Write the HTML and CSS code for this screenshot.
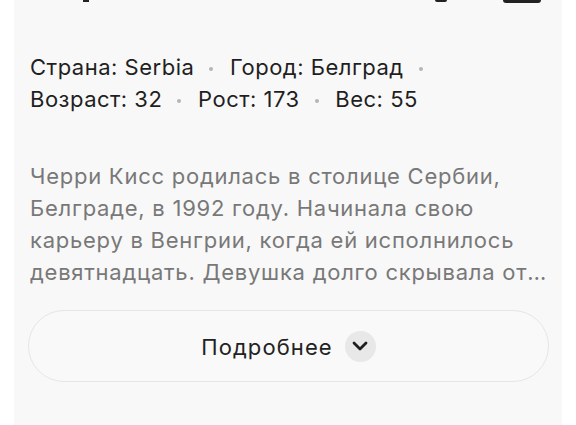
FILE: index.html
```html
<!DOCTYPE html>
<html lang="ru">
<head>
<meta charset="utf-8">
<link rel="stylesheet" href="styles.css">
</head>
<body>
<div class="panel">
  <div class="topcut">
    <span class="frag frag-a"></span>
    <span class="frag frag-b"></span>
    <span class="frag frag-c"></span>
  </div>
  <div class="info">
    <span class="item">Страна: Serbia<span class="dot"></span></span> <span class="item">Город: Белград<span class="dot"></span></span> <span class="item">Возраст: 32<span class="dot"></span></span> <span class="item">Рост: 173<span class="dot"></span></span> <span class="item">Вес: 55</span>
  </div>
  <p class="desc">Черри Кисс родилась в столице Сербии, Белграде, в 1992 году. Начинала свою карьеру в Венгрии, когда ей исполнилось девятнадцать. Девушка долго скрывала от родных свою работу, но со временем решилась рассказать им правду.</p>
  <button class="more" type="button">
    <span class="more-label">Подробнее</span>
    <span class="chev">
      <svg width="18" height="12" viewBox="0 0 18 12"><path d="M3 3 L9 9 L15 3" fill="none" stroke="#1e1e1e" stroke-width="2.8" stroke-linecap="round" stroke-linejoin="round"/></svg>
    </span>
  </button>
</div>
</body>
</html>
```
FILE: styles.css
```css
html, body {
  margin: 0;
  padding: 0;
  background: #ffffff;
  height: 100%;
}
body {
  font-family: "Inter", "Open Sans", sans-serif;
  overflow: hidden;
}
.panel {
  margin: 0 14px;
  background: #f8f8f8;
  min-height: 425px;
  padding: 0 13px 0 14px;
  box-sizing: border-box;
}
.topcut {
  position: relative;
  height: 4px;
}
.frag {
  position: absolute;
  top: 0;
  background: #222;
}
.frag-a { left: 55px; width: 6px; height: 2px; }
.frag-b { left: 407px; width: 12px; height: 2px; border-radius: 0 0 6px 6px; }
.frag-c { left: 475px; width: 38px; height: 3px; border-radius: 0 0 5px 5px; }
.info {
  margin-top: 47px;
  padding-left: 2px;
  font-size: 22px;
  letter-spacing: 0.5px;
  line-height: 32px;
  color: #1f1f1f;
}
.item { white-space: nowrap; }
.dot {
  display: inline-block;
  width: 4px;
  height: 4px;
  border-radius: 50%;
  background: #b5b5b5;
  vertical-align: middle;
  margin: 0 10px 0 15px;
}
.desc {
  margin: 45px 0 0;
  padding-left: 2px;
  font-size: 22px;
  letter-spacing: 0.75px;
  line-height: 32px;
  color: #787878;
  display: -webkit-box;
  -webkit-line-clamp: 4;
  -webkit-box-orient: vertical;
  overflow: hidden;
}
.more {
  margin-top: 22px;
  width: 100%;
  height: 72px;
  border: 1.5px solid #e6e6e6;
  border-radius: 36px;
  background: #f9f9f9;
  display: flex;
  align-items: center;
  justify-content: center;
  gap: 12px;
  font-family: inherit;
  font-size: 22px;
  letter-spacing: 1.1px;
  color: #222;
  padding: 0;
}
.more-label { margin-top: 2px; }
.chev {
  width: 31px;
  height: 31px;
  border-radius: 50%;
  background: #e8e8e8;
  display: flex;
  align-items: center;
  justify-content: center;
}
```
